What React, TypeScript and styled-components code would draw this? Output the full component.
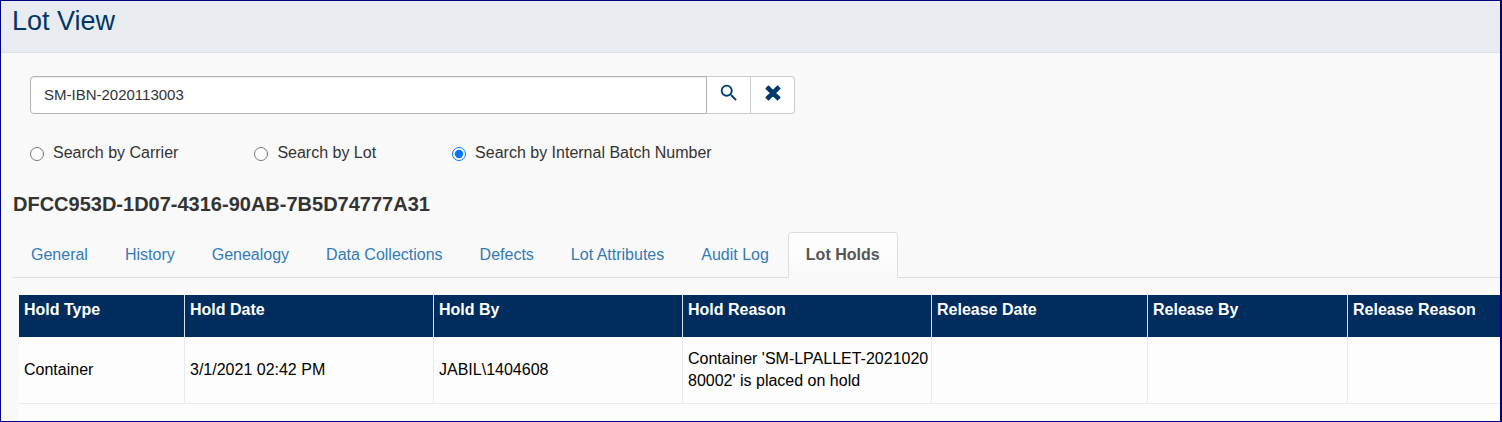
import { useState } from "react";
import styled, { createGlobalStyle } from "styled-components";
import { MdSearch } from "react-icons/md";

const GlobalStyle = createGlobalStyle`
  *, *::before, *::after { box-sizing: border-box; }
  body {
    margin: 0;
    background: #f9f9f9;
    color: #333;
    font: 16px/22px "Liberation Sans", Arial, sans-serif;
  }
`;

const Page = styled.div`
  display: flex;
  flex-direction: column;
  min-height: 100vh;
  border: 1px solid #000080;
  border-right-width: 2px;
`;

const Header = styled.header`
  padding: 5px 11px 15px;
  background: #e8ebf0;
  border-bottom: 1px solid #dce0e8;
`;

const Title = styled.h1`
  margin: 0;
  color: #003764;
  font-size: 27px;
  font-weight: 400;
  line-height: 31px;
`;

const SearchForm = styled.form`
  padding: 23px 29px 0;
`;

const SearchGroup = styled.div`
  display: flex;
  width: 100%;
  max-width: 765px;
  height: 38px;
`;

const SearchInput = styled.input`
  flex: 1;
  min-width: 0;
  padding: 0 13px;
  border: 1px solid #b3b3b3;
  border-radius: 4px 0 0 4px;
  background: #fff;
  box-shadow: inset 0 1px 1px rgba(0, 0, 0, 0.08);
  color: #333;
  font: inherit;
  font-size: 15px;
  outline: none;
`;

const IconButton = styled.button`
  display: flex;
  align-items: center;
  justify-content: center;
  width: 44px;
  padding: 0 0 4px;
  border: 1px solid #ccc;
  border-left: 0;
  background: #fff;
  color: #003a6d;
  cursor: pointer;

  svg { flex: none; }
  &:last-child { border-radius: 0 4px 4px 0; }
`;

const Options = styled.div`
  display: flex;
  flex-wrap: wrap;
  gap: 8px 76px;
  margin-top: 28px;
`;

const Option = styled.label`
  display: flex;
  align-items: flex-start;
  gap: 9px;
`;

const Radio = styled.input`
  width: 14px;
  height: 14px;
  margin: 5px 0 0;
`;

const LotId = styled.h2`
  margin: 28px 12px 16px;
  color: #333;
  font-size: 20px;
  font-weight: 700;
  line-height: 24px;
`;

const Tabs = styled.nav`
  display: flex;
  gap: 1px;
  margin-left: 12px;
  border-bottom: 1px solid #ddd;
`;

const Tab = styled.a<{ $active: boolean }>`
  margin-bottom: -1px;
  padding: 11px 17px;
  border: 1px solid ${(p) => (p.$active ? "#ddd" : "transparent")};
  border-bottom-color: ${(p) => (p.$active ? "#f9f9f9" : "transparent")};
  border-radius: 4px 4px 0 0;
  background: ${(p) => (p.$active ? "linear-gradient(#fff, #f9f9f9)" : "none")};
  color: ${(p) => (p.$active ? "#555" : "#337ab7")};
  font-weight: ${(p) => (p.$active ? 700 : 400)};
  text-decoration: none;
  white-space: nowrap;
`;

const Grid = styled.main`
  flex: 1;
  margin: 17px 0 0 18px;
  background: #fdfdfd;
  overflow-x: auto;
`;

const Table = styled.table`
  width: 100%;
  min-width: 1480px;
  border-collapse: separate;
  border-spacing: 0;
  table-layout: fixed;
`;

const Col = styled.col<{ $width?: number }>`
  width: ${(p) => (p.$width ? `${p.$width}px` : "auto")};
`;

const HeadCell = styled.th`
  padding: 4px 0 16px 5px;
  border-right: 1px solid #ddd;
  background: #002d5d;
  color: #fff;
  text-align: left;
  font-weight: 700;
  &:last-child { border-right: 0; }
`;

const Cell = styled.td`
  padding: 11px 0 11px 5px;
  border-right: 1px solid #ebebeb;
  border-bottom: 1px solid #ebebeb;
  color: #000;
  word-break: break-all;
  &:last-child { border-right: 0; }
`;

const modes = ["Search by Carrier", "Search by Lot", "Search by Internal Batch Number"];
const tabs = ["General", "History", "Genealogy", "Data Collections", "Defects", "Lot Attributes", "Audit Log", "Lot Holds"];
const columns = [
  { title: "Hold Type", width: 166 },
  { title: "Hold Date", width: 249 },
  { title: "Hold By", width: 249 },
  { title: "Hold Reason", width: 249 },
  { title: "Release Date", width: 216 },
  { title: "Release By", width: 200 },
  { title: "Release Reason" },
];
const holds = [
  ["Container", "3/1/2021 02:42 PM", "JABIL\\1404608", "Container 'SM-LPALLET-202102080002' is placed on hold", "", "", ""],
];

export default function App() {
  const [query, setQuery] = useState("SM-IBN-2020113003");
  const [mode, setMode] = useState(modes[2]);
  const [tab, setTab] = useState("Lot Holds");

  return (
    <>
      <GlobalStyle />
      <Page>
        <Header>
          <Title>Lot View</Title>
        </Header>
        <SearchForm onSubmit={(e) => e.preventDefault()}>
          <SearchGroup>
            <SearchInput aria-label="Search" value={query} onChange={(e) => setQuery(e.target.value)} />
            <IconButton type="submit" aria-label="Search">
              <MdSearch size={22} />
            </IconButton>
            <IconButton type="button" aria-label="Clear" onClick={() => setQuery("")}>
              <svg width="16" height="16" viewBox="0 0 16 16">
                <path
                  d="M3.5 1.2L8 5.7L12.5 1.2L14.8 3.5L10.3 8L14.8 12.5L12.5 14.8L8 10.3L3.5 14.8L1.2 12.5L5.7 8L1.2 3.5Z"
                  fill="currentColor"
                  stroke="currentColor"
                  strokeWidth="1.6"
                  strokeLinejoin="round"
                />
              </svg>
            </IconButton>
          </SearchGroup>
          <Options>
            {modes.map((m) => (
              <Option key={m}>
                <Radio type="radio" name="mode" checked={mode === m} onChange={() => setMode(m)} />
                {m}
              </Option>
            ))}
          </Options>
        </SearchForm>
        <LotId>DFCC953D-1D07-4316-90AB-7B5D74777A31</LotId>
        <Tabs>
          {tabs.map((t) => (
            <Tab key={t} href="#" $active={tab === t} onClick={() => setTab(t)}>
              {t}
            </Tab>
          ))}
        </Tabs>
        <Grid>
          <Table>
            <colgroup>
              {columns.map((c) => (
                <Col key={c.title} $width={c.width} />
              ))}
            </colgroup>
            <thead>
              <tr>
                {columns.map((c) => (
                  <HeadCell key={c.title} scope="col">{c.title}</HeadCell>
                ))}
              </tr>
            </thead>
            <tbody>
              {holds.map((row, r) => (
                <tr key={r}>
                  {row.map((value, i) => (
                    <Cell key={columns[i].title}>{value}</Cell>
                  ))}
                </tr>
              ))}
            </tbody>
          </Table>
        </Grid>
      </Page>
    </>
  );
}
